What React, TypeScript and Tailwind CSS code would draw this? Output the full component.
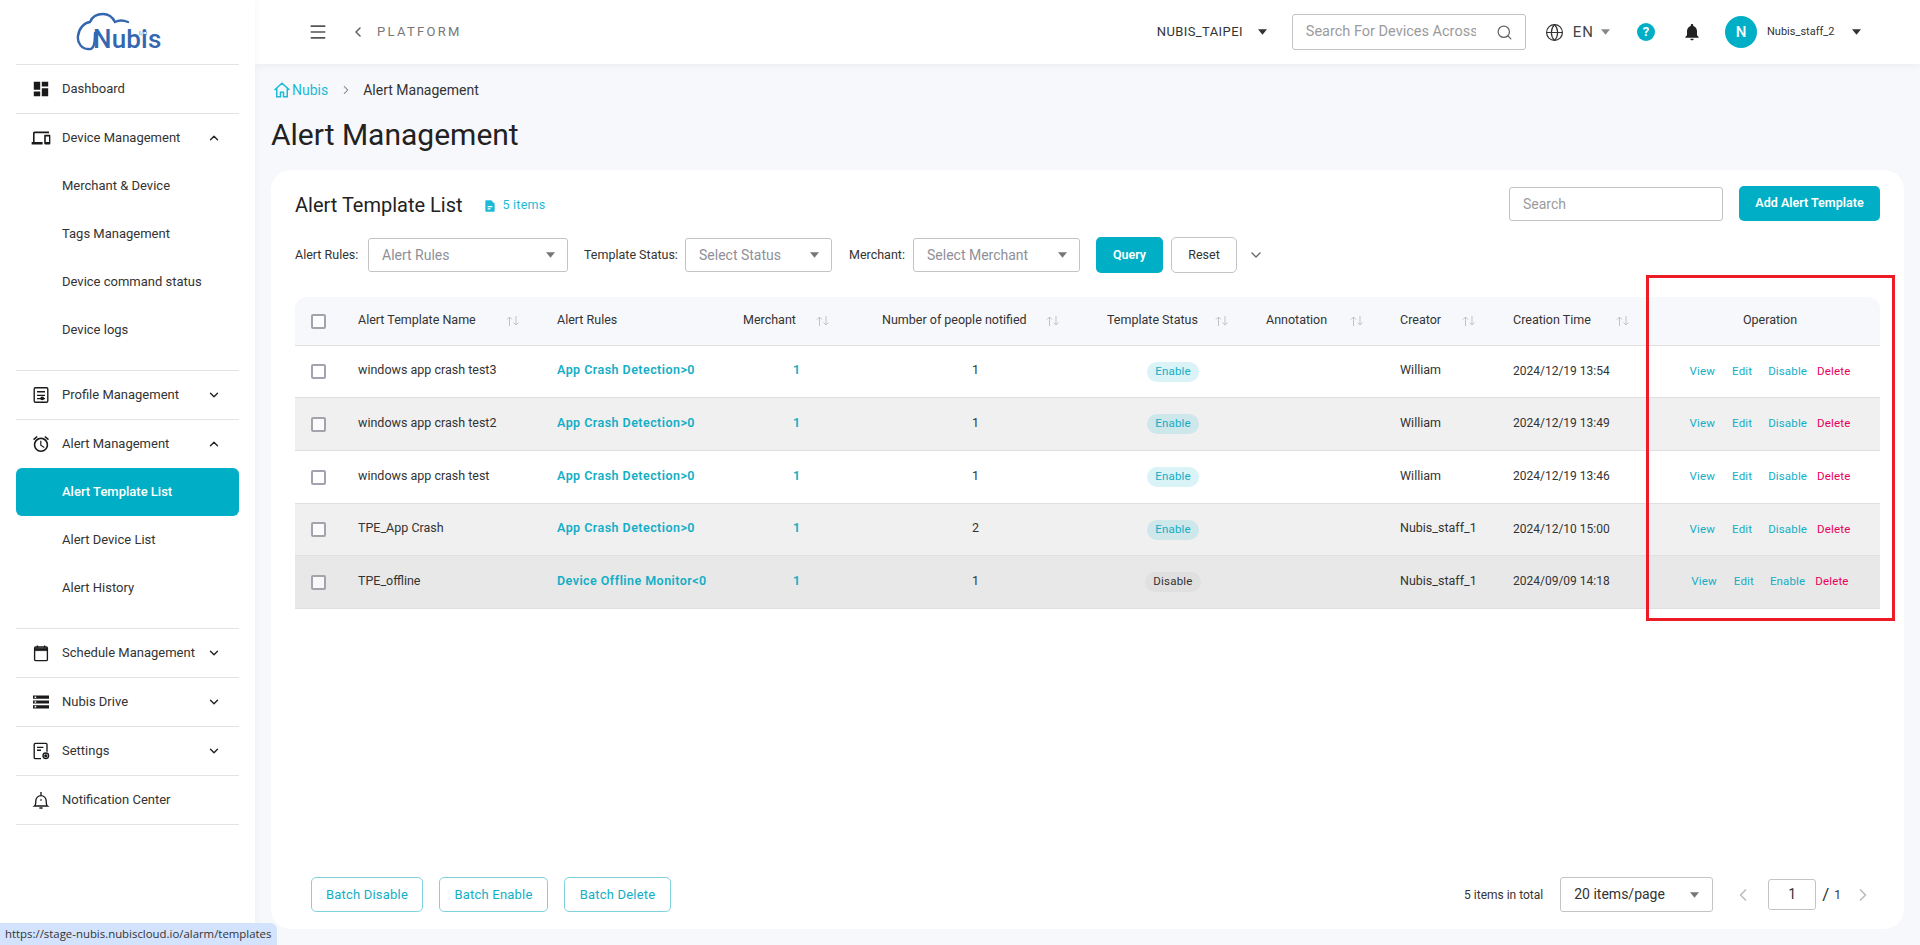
import React from "react";
import { ChevronDown, ChevronUp, ChevronLeft, ChevronRight, Search, Globe, Menu } from "lucide-react";

const P = (d: string, c = "w-[24px] h-[24px]") => (
  <svg viewBox="0 0 24 24" className={c} fill="currentColor"><path d={d} /></svg>
);

const icons: Record<string, React.ReactNode> = {
  dashboard: P("M3 13h8V3H3v10zm0 8h8v-6H3v6zm10 0h8V11h-8v10zm0-18v6h8V3h-8z"),
  devices: P("M4 6h18V4H4c-1.1 0-2 .9-2 2v11H0v3h14v-3H4V6zm19 2h-6c-.55 0-1 .45-1 1v10c0 .55.45 1 1 1h6c.55 0 1-.45 1-1V9c0-.55-.45-1-1-1zm-1 9h-4v-7h4v7z"),
  profile: (
    <svg viewBox="0 0 24 24" className="w-[24px] h-[24px]" fill="none" stroke="currentColor" strokeWidth="1.7">
      <rect x="3.5" y="3" width="17" height="18" rx="1.5" />
      <path d="M7 8h10M7 12.5h10M7 16.5h10" />
      <circle cx="13.5" cy="16.2" r="1.6" fill="currentColor" />
    </svg>
  ),
  alarm: P("M22 5.72l-4.6-3.86-1.29 1.53 4.6 3.86L22 5.72zM7.88 3.39L6.6 1.86 2 5.71l1.29 1.53 4.59-3.85zM12.5 8H11v6l4.75 2.85.75-1.23-4-2.37V8zM12 4c-4.97 0-9 4.03-9 9s4.02 9 9 9c4.97 0 9-4.03 9-9s-4.03-9-9-9zm0 16c-3.87 0-7-3.13-7-7s3.13-7 7-7 7 3.13 7 7-3.13 7-7 7z"),
  calendar: (
    <svg viewBox="0 0 24 24" className="w-[24px] h-[24px]" fill="none" stroke="currentColor">
      <rect x="4" y="4.5" width="16" height="17" rx="1.5" strokeWidth="1.7" />
      <path d="M4 6h16v3H4z" fill="currentColor" strokeWidth="1" />
      <path d="M7.5 2.5v3M16.5 2.5v3" strokeWidth="1.7" />
    </svg>
  ),
  drive: P("M2 20h20v-4H2v4zm2-3h2v2H4v-2zM2 4v4h20V4H2zm4 3H4V5h2v2zm-4 7h20v-4H2v4zm2-3h2v2H4v-2z"),
  settings: (
    <svg viewBox="0 0 24 24" className="w-[24px] h-[24px]" fill="none" stroke="currentColor" strokeWidth="1.7">
      <path d="M12 21.5H5a1.5 1.5 0 0 1-1.5-1.5V4A1.5 1.5 0 0 1 5 2.5h13A1.5 1.5 0 0 1 19.500 4v9" />
      <path d="M7 7.500h8M7 11h5" />
      <circle cx="18" cy="18" r="3.500" />
      <circle cx="18" cy="18" r="1.200" fill="currentColor" />
    </svg>
  ),
  bell: (
    <svg viewBox="0 0 24 24" className="w-[24px] h-[24px]" fill="none" stroke="currentColor" strokeWidth="1.7">
      <path d="M4 19.500c1.500-1 1.500-3 1.500-6.500a6.500 6.500 0 0 1 13 0c0 3.500 0 5.500 1.500 6.500z" />
      <path d="M12 2v4M12 11v2" />
      <path d="M10 22h4" strokeWidth="2" />
    </svg>
  ),
};

function Row({ icon, label, open }: { icon: string; label: string; open?: boolean }) {
  return (
    <div className="h-[48px] flex items-center pl-[13px] pr-[18px] text-[#333]">
      <span className="w-[24px] h-[24px] flex items-center justify-center text-[#1a1a1a] scale-[0.8] mr-[9px]">{icons[icon]}</span>
      <span className="flex-1 text-[13px]">{label}</span>
      {open === true && <ChevronUp className="w-[14px] h-[14px] text-[#222]" strokeWidth={2.4} />}
      {open === false && <ChevronDown className="w-[14px] h-[14px] text-[#222]" strokeWidth={2.4} />}
    </div>
  );
}

function Sub({ label, active }: { label: string; active?: boolean }) {
  return (
    <div className={`h-[48px] flex items-center pl-[46px] text-[13px] rounded-[6px] ${active ? "bg-[#00afc6] text-white font-medium" : "text-[#333]"}`}>
      {label}
    </div>
  );
}

function Sidebar() {
  const line = "border-b border-[#e3e3e3]";
  return (
    <aside className="w-[255px] shrink-0 bg-white px-[16px] shadow-[2px_0_6px_rgba(0,0,0,0.03)] z-10">
      <div className={`h-[65px] relative ${line}`}>
        <svg viewBox="0 0 90 40" className="absolute left-[60px] top-[12px] w-[90px] h-[40px]" fill="none" stroke="#3567b0" strokeWidth="2.400" strokeLinecap="round">
          <path d="M52 10C47 8 43 8 39 10C36 4 31 2 27 2C21 2 16 5 14 10C8 11 3 16 2 24C1 31 6 37 12 37C17 38 19 34 19 21" />
        </svg>
        <span className="absolute left-[77px] top-[24px] text-[26px] leading-[30px] font-medium text-[#3567b0] tracking-[0.2px]">Nubis</span>
        <span className="absolute left-[123px] top-[29px] text-[6px] leading-[7px] text-[#3567b0]">I/O</span>
      </div>
      <div className={line}><Row icon="dashboard" label="Dashboard" /></div>
      <div className={`pb-[16px] ${line}`}>
        <Row icon="devices" label="Device Management" open />
        <Sub label="Merchant & Device" />
        <Sub label="Tags Management" />
        <Sub label="Device command status" />
        <Sub label="Device logs" />
      </div>
      <div className={line}><Row icon="profile" label="Profile Management" open={false} /></div>
      <div className={`pb-[16px] ${line}`}>
        <Row icon="alarm" label="Alert Management" open />
        <Sub label="Alert Template List" active />
        <Sub label="Alert Device List" />
        <Sub label="Alert History" />
      </div>
      <div className={line}><Row icon="calendar" label="Schedule Management" open={false} /></div>
      <div className={line}><Row icon="drive" label="Nubis Drive" open={false} /></div>
      <div className={line}><Row icon="settings" label="Settings" open={false} /></div>
      <div className={line}><Row icon="bell" label="Notification Center" /></div>
    </aside>
  );
}

const Caret = ({ c = "text-[#333]" }: { c?: string }) => (
  <svg viewBox="0 0 10 6" className={`w-[9px] h-[6px] ${c}`} fill="currentColor"><path d="M0 0h10L5 6z" /></svg>
);

function Header() {
  return (
    <header className="h-[64px] bg-white shadow-[0_2px_8px_rgba(0,0,0,0.05)] flex items-center pl-[53px] text-[#333] shrink-0 relative">
      <Menu className="w-[20px] h-[20px] text-[#555]" strokeWidth={2} />
      <ChevronLeft className="w-[16px] h-[16px] text-[#666] ml-[22px]" strokeWidth={2.4} />
      <span className="ml-[11px] text-[13px] tracking-[2.3px] text-[#777]">PLATFORM</span>
      <div className="flex-1" />
      <span className="text-[13px] w-[86px] tracking-[0.4px] whitespace-nowrap">NUBIS_TAIPEI</span>
      <span className="ml-[15px] mr-[25px]"><Caret /></span>
      <div className="w-[234px] h-[36px] border border-[#c4c4c4] rounded-[3px] flex items-center pl-[13px] pr-[12px]">
        <span className="text-[14.500px] text-[#9b9b9b] w-[170px] h-[20px] leading-[20px] overflow-hidden whitespace-nowrap">Search For Devices Across</span>
        <div className="flex-1" />
        <Search className="w-[17px] h-[17px] text-[#666]" strokeWidth={1.8} />
      </div>
      <Globe className="w-[19px] h-[19px] ml-[19px] text-[#333]" strokeWidth={1.5} />
      <span className="ml-[9px] text-[15px] tracking-[1px] text-[#444]">EN</span>
      <span className="ml-[7px]"><Caret c="text-[#888]" /></span>
      <span className="ml-[27px] w-[18px] h-[18px] rounded-full bg-[#00afc6] text-white text-[13px] font-bold flex items-center justify-center">?</span>
      <svg viewBox="0 0 24 24" className="w-[20px] h-[20px] ml-[27px] text-[#222]" fill="currentColor">
        <path d="M12 22c1.100 0 2-.9 2-2h-4c0 1.100.9 2 2 2zm6-6v-5c0-3.070-1.630-5.640-4.500-6.320V4c0-.83-.67-1.500-1.500-1.500s-1.500.67-1.500 1.500v.68C7.640 5.360 6 7.920 6 11v5l-2 2v1h16v-1l-2-2z" />
      </svg>
      <span className="ml-[23px] w-[32px] h-[32px] rounded-full bg-[#00afc6] text-white text-[15px] font-medium flex items-center justify-center">N</span>
      <span className="ml-[10px] text-[11px] w-[70px]">Nubis_staff_2</span>
      <span className="ml-[15px] mr-[59px]"><Caret /></span>
    </header>
  );
}

function SelectBox({ w, text }: { w: string; text: string }) {
  return (
    <div className={`${w} h-[34px] border border-[#c4c4c4] rounded-[3px] flex items-center justify-between pl-[13px] pr-[12px] bg-white`}>
      <span className="text-[14px] text-[#8f8f99]">{text}</span>
      <Caret c="text-[#777]" />
    </div>
  );
}

const SortIcon = () => (
  <svg viewBox="0 0 16 12" className="w-[16px] h-[12px] text-[#c2c2c2]" fill="none" stroke="currentColor" strokeWidth="1">
    <path d="M4.500 11V2M2 4.500 4.500 2 7 4.500M11 1v9M8.500 7.500 11 10l2.500-2.500" />
  </svg>
);

const Check = () => (
  <span className="block w-[15px] h-[15px] bg-white/70 border-2 border-[#a3a3ad] rounded-[2px]" />
);

type RowData = { name: string; rule: string; num: string; status: string; creator: string; time: string; bg: string; h: string };
const rows: RowData[] = [
  { name: "windows app crash test3", rule: "App Crash Detection>0", num: "1", status: "Enable", creator: "William", time: "2024/12/19 13:54", bg: "bg-white", h: "h-[52px]" },
  { name: "windows app crash test2", rule: "App Crash Detection>0", num: "1", status: "Enable", creator: "William", time: "2024/12/19 13:49", bg: "bg-[#f0f0f0]", h: "h-[53px]" },
  { name: "windows app crash test", rule: "App Crash Detection>0", num: "1", status: "Enable", creator: "William", time: "2024/12/19 13:46", bg: "bg-white", h: "h-[53px]" },
  { name: "TPE_App Crash", rule: "App Crash Detection>0", num: "2", status: "Enable", creator: "Nubis_staff_1", time: "2024/12/10 15:00", bg: "bg-[#f0f0f0]", h: "h-[52px]" },
  { name: "TPE_offline", rule: "Device Offline Monitor<0", num: "1", status: "Disable", creator: "Nubis_staff_1", time: "2024/09/09 14:18", bg: "bg-[#e8e8e8]", h: "h-[53px]" },
];

const gridCols = "grid grid-cols-[51px_12px_199px_174px_139px_225px_159px_134px_113px_159px_220px]";

function Head({ label, sortGap, className = "" }: { label: string; sortGap?: string; className?: string }) {
  return (
    <div className={`flex items-center whitespace-nowrap ${className}`}>
      <span className="-mt-[2px]">{label}</span>
      {sortGap && <span className={sortGap}><SortIcon /></span>}
    </div>
  );
}

function Table() {
  return (
    <div className="mt-[24px] text-[12.500px] text-[#333]">
      <div className={`${gridCols} h-[49px] items-center bg-[#f7f8fc] rounded-t-[12px] border-b border-[#e0e0e0]`}>
        <div className="pl-[16px]"><Check /></div>
        <div />
        <Head label="Alert Template Name" sortGap="ml-[29px]" />
        <Head label="Alert Rules" />
        <Head label="Merchant" sortGap="ml-[19px]" className="pl-[12px]" />
        <Head label="Number of people notified" sortGap="ml-[18px]" className="pl-[12px]" />
        <Head label="Template Status" sortGap="ml-[16px]" className="pl-[12px]" />
        <Head label="Annotation" sortGap="ml-[22px]" className="pl-[12px]" />
        <Head label="Creator" sortGap="ml-[20px]" className="pl-[12px]" />
        <Head label="Creation Time" sortGap="ml-[24px]" className="pl-[12px]" />
        <div className="text-center -mt-[2px]">Operation</div>
      </div>
      {rows.map((r) => {
        const en = r.status === "Enable";
        const gray = r.bg !== "bg-white";
        return (
          <div key={r.name} className={`${gridCols} ${r.h} items-center ${r.bg} border-b border-[#e0e0e0]`}>
            <div className="pl-[16px]"><Check /></div>
            <div />
            <div className="whitespace-nowrap -mt-[2px]">{r.name}</div>
            <div className="whitespace-nowrap font-semibold text-[#13aec6] tracking-[0.45px] -mt-[2px]">{r.rule}</div>
            <div className="font-semibold text-[#13aec6] pl-[62px] -mt-[2px]">1</div>
            <div className="pl-[102px] -mt-[2px]">{r.num}</div>
            <div className="flex justify-center pr-[3px]">
              <span className={`h-[20px] rounded-full px-[8px] text-[11.500px] flex items-center tracking-[0.2px] ${en ? (gray ? "bg-[#cde7ea] text-[#13aec6]" : "bg-[#d9f3f6] text-[#13aec6]") : "bg-[#e0e0e0] text-[#333]"}`}>{r.status}</span>
            </div>
            <div />
            <div className="pl-[12px] whitespace-nowrap -mt-[2px]">{r.creator}</div>
            <div className="pl-[12px] whitespace-nowrap text-[12px] -mt-[2px]">{r.time}</div>
            <div className="flex justify-center gap-[17px] text-[11.500px] text-[#13aec6] tracking-[0.15px]">
              <span>View</span>
              <span>Edit</span>
              <span className="-ml-[1px]">{en ? "Disable" : "Enable"}</span>
              <span className="text-[#e6005c] -ml-[7px]">Delete</span>
            </div>
          </div>
        );
      })}
    </div>
  );
}

const BatchBtn = ({ label, w }: { label: string; w: string }) => (
  <div className={`${w} h-[35px] border border-[#7fd3df] rounded-[5px] flex items-center justify-center text-[13px] tracking-[0.2px] text-[#13aec6]`}>{label}</div>
);

function Card() {
  return (
    <section className="ml-[16px] mr-[16px] h-[759px] bg-white rounded-[20px] px-[24px] flex flex-col shrink-0">
      <div className="flex items-center mt-[16px] h-[35px]">
        <h2 className="text-[20px] text-[#222] pt-[2px]">Alert Template List</h2>
        <svg viewBox="0 0 24 24" className="w-[14px] h-[14px] ml-[20px] mt-[4px] text-[#1cbad6]" fill="currentColor">
          <path d="M14 2H6a2 2 0 0 0-2 2v16a2 2 0 0 0 2 2h12a2 2 0 0 0 2-2V8zM8 12h8v2H8zm0 4h5v2H8z" />
        </svg>
        <span className="ml-[6px] mt-[4px] text-[12.500px] tracking-[0.2px] text-[#1cbad6]">5 items</span>
        <div className="flex-1" />
        <div className="w-[214px] h-[34px] border border-[#c4c4c4] rounded-[3px] flex items-center pl-[13px] pt-[2px] text-[14px] text-[#9b9b9b]">Search</div>
        <div className="ml-[16px] w-[141px] h-[35px] bg-[#00afc6] rounded-[5px] flex items-center justify-center text-white text-[12.500px] font-semibold">Add Alert Template</div>
      </div>
      <div className="flex items-center mt-[16px] h-[36px] text-[12.500px] text-[#333]">
        <span className="w-[73px] whitespace-nowrap">Alert Rules:</span>
        <SelectBox w="w-[200px]" text="Alert Rules" />
        <span className="ml-[16px] w-[101px] whitespace-nowrap">Template Status:</span>
        <SelectBox w="w-[147px]" text="Select Status" />
        <span className="ml-[17px] w-[64px] whitespace-nowrap">Merchant:</span>
        <SelectBox w="w-[167px]" text="Select Merchant" />
        <div className="ml-[16px] w-[67px] h-[36px] bg-[#00afc6] rounded-[5px] flex items-center justify-center text-white font-semibold">Query</div>
        <div className="ml-[8px] w-[66px] h-[36px] border border-[#c4c4c4] rounded-[5px] flex items-center justify-center">Reset</div>
        <ChevronDown className="ml-[11px] w-[16px] h-[16px] text-[#666]" strokeWidth={2} />
      </div>
      <Table />
      <div className="flex-1" />
      <div className="flex items-center h-[35px] mb-[17px] pl-[16px]">
        <BatchBtn label="Batch Disable" w="w-[112px]" />
        <span className="ml-[16px]"><BatchBtn label="Batch Enable" w="w-[109px]" /></span>
        <span className="ml-[16px]"><BatchBtn label="Batch Delete" w="w-[107px]" /></span>
        <div className="flex-1" />
        <span className="text-[12px] text-[#333]">5 items in total</span>
        <div className="ml-[17px] w-[153px] h-[35px] border border-[#c4c4c4] rounded-[3px] flex items-center justify-between pl-[13px] pr-[13px]">
          <span className="text-[14px] text-[#333]">20 items/page</span>
          <Caret c="text-[#777]" />
        </div>
        <ChevronLeft className="ml-[20px] w-[20px] h-[20px] text-[#bdbdbd]" strokeWidth={2} />
        <div className="ml-[15px] w-[48px] h-[31px] border border-[#c4c4c4] rounded-[3px] flex items-center justify-center text-[14px] text-[#333]">1</div>
        <span className="ml-[6px] text-[17px] text-[#333]">/</span>
        <span className="ml-[5px] text-[12px] text-[#333]">1</span>
        <ChevronRight className="ml-[12px] mr-[7px] w-[20px] h-[20px] text-[#bdbdbd]" strokeWidth={2} />
      </div>
    </section>
  );
}

export default function App() {
  return (
    <div className="relative flex h-[945px] w-[1920px] overflow-hidden bg-[#f7f8fc] font-[Roboto,sans-serif]">
      <Sidebar />
      <main className="flex-1 flex flex-col min-w-0">
        <Header />
        <div className="ml-[18px] h-[52px] flex items-center text-[14px] text-[#333] shrink-0">
          <svg viewBox="0 0 24 24" className="w-[18px] h-[18px] text-[#1cbad6]" fill="none" stroke="currentColor" strokeWidth="2">
            <path d="M2 12 12 3l10 9M5 10v11h5v-6h4v6h5V10" />
          </svg>
          <span className="ml-[1px] text-[#1cbad6]">Nubis</span>
          <ChevronRight className="ml-[11px] w-[14px] h-[14px] text-[#777]" strokeWidth={1.8} />
          <span className="ml-[10px]">Alert Management</span>
        </div>
        <h1 className="ml-[16px] h-[54px] flex items-center text-[30px] leading-none text-[#222] shrink-0 pb-[16px]">Alert Management</h1>
        <Card />
      </main>
      <div className="absolute left-[1646px] top-[275px] w-[249px] h-[346px] border-[3px] border-[#ed1c24] z-20" />
      <div className="absolute left-0 bottom-0 h-[22px] w-[277px] bg-[#d3e3fd] rounded-tr-[6px] pl-[5px] flex items-center text-[11.400px] text-[#333] font-[Open_Sans,sans-serif] whitespace-nowrap z-20">https://stage-nubis.nubiscloud.io/alarm/templates</div>
    </div>
  );
}
